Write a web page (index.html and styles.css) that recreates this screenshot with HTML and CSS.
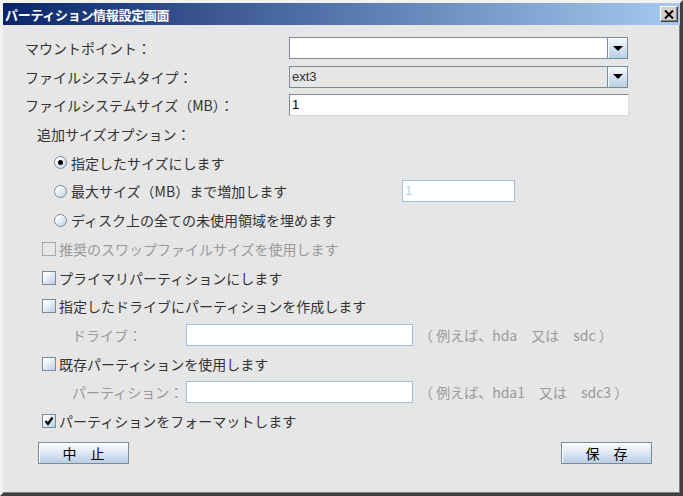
FILE: index.html
```html
<!DOCTYPE html>
<html lang="ja">
  <head>
    <meta charset="UTF-8" />
    <meta name="viewport" content="width=device-width, initial-scale=1.0" />
    <title>パーティション情報設定画面</title>
    <link rel="stylesheet" href="styles.css">
  </head>
  <body>
    <div class="window">
      <div class="titlebar">
        <span class="title">パーティション情報設定画面</span>
        <span class="close">
          <svg width="10" height="9" viewBox="0 0 10 9">
            <path d="M1 0.5 L9 8.5 M9 0.5 L1 8.5" stroke="#000" stroke-width="2" fill="none" />
          </svg>
        </span>
      </div>

      <div class="content">
        <div class="row">
          <span class="field-label">マウントポイント：</span>
          <div class="combo">
            <span class="combo-value"></span>
            <span class="combo-arrow"><i class="tri"></i></span>
          </div>
        </div>

        <div class="row">
          <span class="field-label">ファイルシステムタイプ：</span>
          <div class="combo readonly">
            <span class="combo-value">ext3</span>
            <span class="combo-arrow"><i class="tri"></i></span>
          </div>
        </div>

        <div class="row">
          <span class="field-label">ファイルシステムサイズ（MB）：</span>
          <div class="textfield wide">1</div>
        </div>

        <div class="row group-label">追加サイズオプション：</div>

        <div class="row option">
          <span class="choice">
            <span class="radio selected"></span>指定したサイズにします
          </span>
        </div>

        <div class="row option">
          <span class="choice fixed">
            <span class="radio"></span>最大サイズ（MB）まで増加します
          </span>
          <div class="textfield disabled small">1</div>
        </div>

        <div class="row option">
          <span class="choice">
            <span class="radio"></span>ディスク上の全ての未使用領域を埋めます
          </span>
        </div>

        <div class="row check-row muted">
          <span class="checkbox off"></span>推奨のスワップファイルサイズを使用します
        </div>

        <div class="row check-row">
          <span class="checkbox"></span>プライマリパーティションにします
        </div>

        <div class="row check-row">
          <span class="checkbox"></span>指定したドライブにパーティションを作成します
        </div>

        <div class="row sub-row">
          <span class="sub-label">ドライブ：</span>
          <div class="textfield disabled medium"></div>
          <span class="hint">（ 例えば、hda　又は　sdc ）</span>
        </div>

        <div class="row check-row">
          <span class="checkbox"></span>既存パーティションを使用します
        </div>

        <div class="row sub-row">
          <span class="sub-label">パーティション：</span>
          <div class="textfield disabled medium"></div>
          <span class="hint">（ 例えば、hda1　又は　sdc3 ）</span>
        </div>

        <div class="row check-row">
          <span class="checkbox checked">
            <svg width="12" height="12" viewBox="0 0 12 12">
              <path d="M2.5 6 L5 9 L9.5 2.5" stroke="#000" stroke-width="2.2" fill="none" />
            </svg>
          </span>パーティションをフォーマットします
        </div>

        <div class="buttons">
          <button class="btn">中　止</button>
          <button class="btn">保　存</button>
        </div>
      </div>
    </div>
  </body>
</html>
```

FILE: styles.css
```css
* {
  box-sizing: border-box;
}

body {
  margin: 0;
  background: #e6e6e6;
  font-family: "Noto Sans CJK JP", "Liberation Sans", sans-serif;
  font-size: 14px;
  color: #333333;
}

.window {
  width: 683px;
  height: 496px;
  border-style: solid;
  border-width: 3px;
  border-color: #f2f2f2 #404040 #404040 #f2f2f2;
  box-shadow: inset -1px -1px 0 #808080;
  background: #e6e6e6;
  display: flex;
  flex-direction: column;
}

.titlebar {
  height: 22px;
  background: linear-gradient(to right, #0a246a, #a6caf0);
  display: flex;
  align-items: center;
  justify-content: space-between;
  padding: 0 2px 0 2px;
}

.title {
  color: #fff;
  font-weight: bold;
  font-size: 13px;
  letter-spacing: -0.3px;
}

.close {
  width: 18px;
  height: 16px;
  background: #d4d0c8;
  border: 1px solid;
  border-color: #ffffff #404040 #404040 #ffffff;
  box-shadow: inset -1px -1px 0 #808080;
  display: flex;
  align-items: center;
  justify-content: center;
}

.content {
  flex: 1;
  padding: 12px 0 0 22px;
  display: flex;
  flex-direction: column;
  gap: 6.7px;
}

.row {
  display: flex;
  align-items: center;
  height: 22px;
  white-space: nowrap;
}

.field-label {
  width: 264px;
}

.combo {
  width: 339px;
  height: 22px;
  border: 1px solid #7a8a99;
  background: #fff;
  display: flex;
}

.combo.readonly {
  background: #e6e6e6;
}

.combo-value {
  flex: 1;
  padding-left: 2px;
  line-height: 20px;
  font-family: "Liberation Sans", sans-serif;
  font-size: 13px;
  color: #333;
}

.combo-arrow {
  width: 20px;
  border-left: 1px solid #7a8a99;
  background: linear-gradient(#f4f8fc, #b8cfe5);
  box-shadow: inset 1px 1px 0 #ffffff;
  display: flex;
  align-items: center;
  justify-content: center;
}

.tri {
  width: 0;
  height: 0;
  border-left: 5px solid transparent;
  border-right: 5px solid transparent;
  border-top: 5px solid #000;
}

.textfield {
  height: 22px;
  background: #fff;
  border: 1px solid;
  border-color: #7a8a99 #d2dae2 #d2dae2 #7a8a99;
  padding-left: 2px;
  line-height: 20px;
  font-family: "Liberation Sans", sans-serif;
  font-size: 13px;
  color: #000;
}

.textfield.wide {
  width: 340px;
}

.textfield.disabled {
  border-color: #a9bdd2;
  color: #b8cfe5;
}

.textfield.small {
  width: 113px;
}

.textfield.medium {
  width: 227px;
}

.group-label {
  padding-left: 12px;
}

.option {
  padding-left: 29px;
}

.choice {
  display: flex;
  align-items: center;
}

.choice.fixed {
  width: 348px;
}

.radio {
  width: 13px;
  height: 13px;
  border-radius: 50%;
  border: 1px solid #7a8a99;
  background: linear-gradient(135deg, #ffffff 20%, #b8cfe5);
  margin-right: 4px;
  display: flex;
  align-items: center;
  justify-content: center;
}

.radio.selected::after {
  content: "";
  width: 5px;
  height: 5px;
  border-radius: 50%;
  background: #000;
}

.check-row {
  padding-left: 17px;
}

.checkbox {
  width: 14px;
  height: 14px;
  border: 1px solid #7a8a99;
  background: linear-gradient(135deg, #ffffff 15%, #b8cfe5);
  margin-right: 3px;
  display: flex;
  align-items: center;
  justify-content: center;
}

.checkbox.off {
  background: transparent;
  border-color: #a0a8b0;
}

.muted {
  color: #999999;
}

.sub-row {
  padding-left: 47px;
}

.sub-label {
  width: 114px;
  color: #999999;
}

.hint {
  margin-left: 6px;
  font-size: 14px;
  color: #999999;
}

.buttons {
  display: flex;
  justify-content: space-between;
  padding: 0 28px 0 13px;
  margin-top: 3px;
}

.btn {
  width: 91px;
  height: 22px;
  border: 1px solid #7a8a99;
  background: linear-gradient(#ffffff, #b8cfe5);
  box-shadow: inset 1px 1px 0 #ffffff;
  font-family: "Noto Sans CJK JP", sans-serif;
  font-size: 14px;
  color: #000;
  padding: 0;
  line-height: 20px;
}
```
